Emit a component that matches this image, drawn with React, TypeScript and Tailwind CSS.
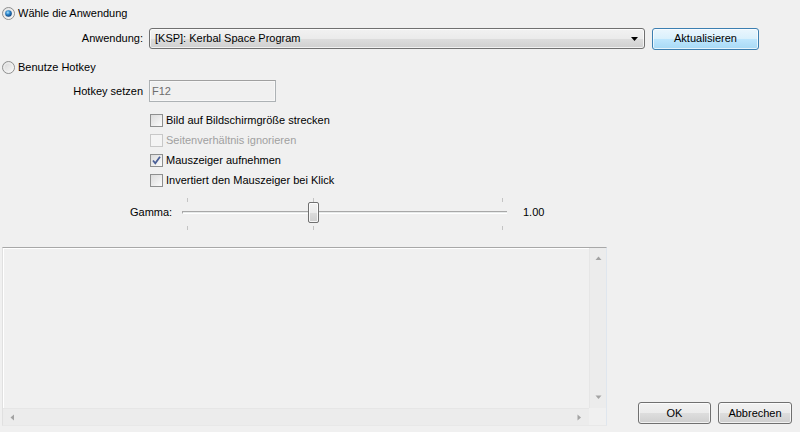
import React from "react";

function Radio({ checked }: { checked?: boolean }) {
  return (
    <svg width="13" height="13" viewBox="0 0 13 13" className="shrink-0">
      <defs>
        <linearGradient id="rg" x1="0" y1="0" x2="1" y2="1">
          <stop offset="0" stopColor="#d4d4d4" />
          <stop offset="1" stopColor="#fbfbfb" />
        </linearGradient>
        <radialGradient id="dot" cx="0.4" cy="0.35" r="0.7">
          <stop offset="0" stopColor="#a6e1ff" />
          <stop offset="0.45" stopColor="#2a85cb" />
          <stop offset="1" stopColor="#0d3a73" />
        </radialGradient>
      </defs>
      <circle cx="6.5" cy="6.5" r="6" fill="url(#rg)" stroke="#8e8f8f" strokeWidth="1" />
      <circle cx="6.5" cy="6.5" r="4.6" fill="none" stroke="#f4f4f4" strokeWidth="0.8" />
      {checked && <circle cx="6.5" cy="6.5" r="3.3" fill="url(#dot)" />}
    </svg>
  );
}

function Checkbox({ checked, disabled }: { checked?: boolean; disabled?: boolean }) {
  return (
    <div
      className={
        "w-[13px] h-[13px] shrink-0 border flex items-center justify-center " +
        (disabled
          ? "border-[#c8c8c8] bg-[#f4f4f4]"
          : "border-[#8e8f8f] bg-gradient-to-br from-[#dcdcdc] to-[#fbfbfb]")
      }
    >
      {checked && (
        <svg width="11" height="11" viewBox="0 0 11 11">
          <path d="M2 5.5 L4.3 8.3 L9 1.8" fill="none" stroke="#4a5f97" strokeWidth="1.8" />
        </svg>
      )}
    </div>
  );
}

function CheckRow({ label, checked, disabled }: { label: string; checked?: boolean; disabled?: boolean }) {
  return (
    <div className="h-[20px] flex items-center pl-[150px] gap-[3px]">
      <Checkbox checked={checked} disabled={disabled} />
      <span className={disabled ? "text-[#a0a0a0]" : "text-black"}>{label}</span>
    </div>
  );
}

function WinButton({ children, w, def }: { children: React.ReactNode; w: string; def?: boolean }) {
  return (
    <div
      className={
        "h-[22px] rounded-[3px] border flex items-center justify-center shadow-[inset_0_0_0_1px_rgba(255,255,255,0.7)] " +
        w +
        " " +
        (def
          ? "border-[#3c7fb1] bg-[linear-gradient(to_bottom,#eaf6fd_0%,#d9f0fc_50%,#bee6fd_51%,#a7d9f5_100%)]"
          : "border-[#707070] bg-[linear-gradient(to_bottom,#f2f2f2_0%,#ebebeb_50%,#dddddd_51%,#cfcfcf_100%)]")
      }
    >
      {children}
    </div>
  );
}

function Tri({ dir }: { dir: "up" | "down" | "left" | "right" }) {
  const d =
    dir === "up"
      ? "M0.5 4 L3.5 0.5 L6.5 4 Z"
      : dir === "down"
      ? "M0.5 0.5 L3.5 4 L6.5 0.5 Z"
      : dir === "left"
      ? "M4 0.5 L0.5 3.5 L4 6.5 Z"
      : "M0.5 0.5 L4 3.5 L0.5 6.5 Z";
  const horiz = dir === "up" || dir === "down";
  return (
    <svg width={horiz ? 7 : 5} height={horiz ? 5 : 7} viewBox={horiz ? "0 0 7 5" : "0 0 5 7"}>
      <path d={d} fill="#a3a3a3" />
    </svg>
  );
}

export default function App() {
  return (
    <div
      className="w-[800px] h-[432px] bg-[#f0f0f0] text-black text-[11px] leading-none flex flex-col overflow-hidden"
      style={{ fontFamily: '"Liberation Sans", Arial, sans-serif' }}
    >
      {/* Row 1 */}
      <div className="h-[26px] flex items-center pl-[2px] gap-[3px]">
        <Radio checked />
        <span>Wähle die Anwendung</span>
      </div>

      {/* Row 2 */}
      <div className="h-[25px] flex items-center">
        <div className="w-[143px] text-right">Anwendung:</div>
        <div className="ml-[6px] w-[496px] h-[21px] rounded-[3px] border border-[#707070] bg-[linear-gradient(to_bottom,#f2f2f2_0%,#ebebeb_50%,#dddddd_51%,#cfcfcf_100%)] shadow-[inset_0_0_0_1px_rgba(255,255,255,0.7)] flex items-center pl-[5px] pr-[6px]">
          <span className="flex-1">[KSP]: Kerbal Space Program</span>
          <svg width="7" height="4" viewBox="0 0 7 4">
            <path d="M0 0 L7 0 L3.5 4 Z" fill="#000" />
          </svg>
        </div>
        <div className="ml-[7px]">
          <WinButton w="w-[107px]" def>
            Aktualisieren
          </WinButton>
        </div>
      </div>

      {/* Row 3 */}
      <div className="mt-[8px] h-[16px] flex items-center pl-[2px] gap-[3px]">
        <Radio />
        <span>Benutze Hotkey</span>
      </div>

      {/* Row 4 */}
      <div className="mt-[5px] h-[22px] flex items-center">
        <div className="w-[143px] text-right">Hotkey setzen</div>
        <div className="ml-[6px] w-[127px] h-[22px] border border-[#adb2b5] border-t-[#a0a0a0] bg-[#f0f0f0] flex items-center pl-[2px] text-[#6d6d6d] shadow-[inset_0_0_0_1px_#f7f7f7]">
          F12
        </div>
      </div>

      {/* Checkboxes */}
      <div className="mt-[8px] flex flex-col">
        <CheckRow label="Bild auf Bildschirmgröße strecken" />
        <CheckRow label="Seitenverhältnis ignorieren" disabled />
        <CheckRow label="Mauszeiger aufnehmen" checked />
        <CheckRow label="Invertiert den Mauszeiger bei Klick" />
      </div>

      {/* Gamma */}
      <div className="mt-[2px] h-[40px] flex items-center">
        <div className="w-[180px] pl-[130px]">Gamma:</div>
        <div className="relative w-[330px] h-[40px]">
          <div className="absolute left-[2px] right-[3px] top-[19px] h-[3px] border-t border-[#a8a8a8] border-l border-l-[#a8a8a8] bg-[#e7eaea] border-b border-b-white" />
          {[7, 133, 322].map((x) => (
            <React.Fragment key={x}>
              <div className="absolute top-[6px] w-px h-[4px] bg-[#c4c4c4]" style={{ left: x }} />
              <div className="absolute top-[34px] w-px h-[4px] bg-[#c4c4c4]" style={{ left: x }} />
            </React.Fragment>
          ))}
          <div className="absolute left-[128px] top-[10px] w-[11px] h-[21px] rounded-[2px] border border-[#707070] bg-[linear-gradient(to_bottom,#f2f2f2_0%,#ebebeb_50%,#dcdcdc_51%,#cfcfcf_100%)] shadow-[inset_0_0_0_1px_rgba(255,255,255,0.8)]" />
        </div>
        <div className="ml-[13px]">1.00</div>
      </div>

      {/* Bottom area */}
      <div className="mt-[15px] flex items-end">
        <div className="ml-[2px] w-[605px] h-[179px] border border-[#a8a8a8] border-l-[#e0e0e0] border-r-[#dfe6ee] border-b-[#e8e8e8] shadow-[inset_1px_1px_0_0_#ffffff] bg-[#f0f0f0] flex flex-col">
          <div className="flex flex-1 min-h-0">
            <div className="flex-1" />
            <div className="w-[17px] flex flex-col items-center justify-between bg-[#ececec] border-l border-[#e6e6e6] py-[8px]">
              <Tri dir="up" />
              <Tri dir="down" />
            </div>
          </div>
          <div className="h-[17px] flex">
            <div className="flex-1 bg-[#ececec] border-t border-[#e6e6e6] flex items-center justify-between px-[7px]">
              <Tri dir="left" />
              <Tri dir="right" />
            </div>
            <div className="w-[17px] bg-[#f0f0f0]" />
          </div>
        </div>
        <div className="ml-auto mr-[8px] mb-[2px] flex gap-[7px]">
          <WinButton w="w-[73px]">OK</WinButton>
          <WinButton w="w-[74px]">Abbrechen</WinButton>
        </div>
      </div>
    </div>
  );
}
